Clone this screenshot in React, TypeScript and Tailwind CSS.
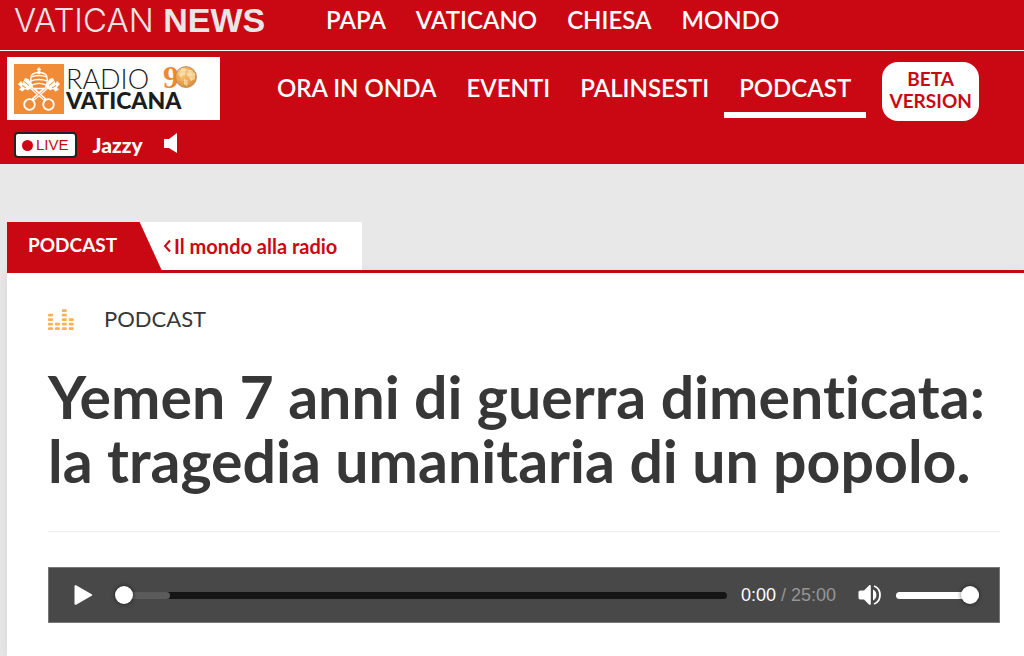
import React from 'react'

const sections = ['PAPA', 'VATICANO', 'CHIESA', 'MONDO']
const radioLinks = ['ORA IN ONDA', 'EVENTI', 'PALINSESTI', 'PODCAST']

// filled cells per column of the equalizer
const levels = [4, 2, 5, 3]

function Emblem() {
  return (
    <svg viewBox="0 0 50 50" className="h-[50px] w-[50px] shrink-0" aria-hidden="true">
      <rect width="50" height="50" fill="#f08c38" />
      <g fill="none" stroke="#fff">
        <circle cx="15.500" cy="40.500" r="5.300" strokeWidth="1.800" />
        <circle cx="34.500" cy="40.500" r="5.300" strokeWidth="1.800" />
        <path d="M18.500 36 37 20M31.500 36 13 20" strokeWidth="3.400" />
        <path d="M20 35 37 20M30 35 13 20" stroke="#f08c38" strokeWidth="0.900" />
        <path d="M17.500 11.500c-1.500 5-1 9 1.500 13h12c2.500-4 3-8 1.500-13-3-4-12-4-15 0z" fill="#f08c38" strokeWidth="1.400" />
        <path d="M17.500 13c4-2 11-2 15 0M17 17c4-2 12-2 16 0M18 21c4-2 10-2 14 0" strokeWidth="1.300" />
        <path d="M25 3.500v5M23 5.500h4" strokeWidth="1.400" />
        <path d="M21.500 25.500 25 29l3.500-3.500" strokeWidth="1.300" />
      </g>
      <g fill="#fff">
        <path d="M4 20l3-3 1.500 2.500L11 14l3.500 1 2.500 4 2 3-5 4.500-3-1.500-2.500 2.500L5 25.500l2-2zM46 20l-3-3-1.500 2.500L39 14l-3.500 1-2.500 4-2 3 5 4.500 3-1.500 2.500 2.500 3.500-2-2-2z" />
        <circle cx="25" cy="8.500" r="1.800" />
      </g>
      <path d="M10 17.500l5 4M8 21.500l4 2.500M40 17.500l-5 4M42 21.500l-4 2.500" stroke="#f08c38" strokeWidth="1" />
    </svg>
  )
}

function Globe() {
  return (
    <svg viewBox="0 0 22 22" className="-ml-1 h-[22px] w-[22px]" aria-hidden="true">
      <defs>
        <radialGradient id="globe" cx="0.4" cy="0.35" r="0.7">
          <stop offset="0" stopColor="#fbd28e" />
          <stop offset="0.6" stopColor="#f0a650" />
          <stop offset="1" stopColor="#d08a3c" />
        </radialGradient>
      </defs>
      <circle cx="11" cy="11" r="10.500" fill="url(#globe)" stroke="#a98a62" strokeWidth="0.800" />
      <path d="M3 6l4-4 5 1-1 4-3 2-1 3-3-2zM13 4l4 0 3 4 0 5-4 2-2-4-2-2zM9 13l4 2-1 5-3-2z" fill="#fbe3b4" opacity="0.850" />
      <path d="M1 11h20M11 1v20M3 6h16M3 16h16M6 2.500c-3 5-3 12 0 17M16 2.500c3 5 3 12 0 17" fill="none" stroke="#e08a2c" strokeWidth="0.400" opacity="0.600" />
    </svg>
  )
}

function Equalizer() {
  return (
    <svg viewBox="0 0 26 21" className="h-[21px] w-[26px]" fill="#fbb254" aria-hidden="true">
      {levels.map((count, col) =>
        Array.from({ length: count }, (_, row) => (
          <rect key={`${col}-${row}`} x={col * 6.9} y={18.2 - row * 4.5} width="5" height="2.800" rx="0.800" />
        ))
      )}
    </svg>
  )
}

const rangeClass =
  'relative block h-[18px] w-full appearance-none bg-transparent [&::-webkit-slider-thumb]:size-[18px] [&::-webkit-slider-thumb]:appearance-none [&::-webkit-slider-thumb]:rounded-full [&::-webkit-slider-thumb]:bg-white [&::-webkit-slider-thumb]:shadow-[0_0_4px_rgba(0,0,0,0.6)]'

function Player() {
  return (
    <div className="flex h-14 items-center border border-[#777] bg-[#484848] pr-5 pl-6">
      <button type="button" aria-label="Play">
        <svg viewBox="0 0 20 20" className="h-5 w-5" fill="#fff">
          <path d="M1.500 1.500C1.500.3 2.500 0 3.500.6l15.200 8.600c.8.500.8 1.200 0 1.600L3.500 19.400c-1 .6-2 .3-2-.9z" />
        </svg>
      </button>
      <div className="relative ml-[22px] flex-1">
        <div className="absolute inset-x-0 top-[6px] h-[7px] rounded-full bg-[#151515]">
          <div className="h-full w-[9%] rounded-full bg-[#5b5b5b]" />
        </div>
        <input type="range" aria-label="Seek" min={0} max={1500} defaultValue={0} className={rangeClass} />
      </div>
      <div className="ml-[14px] font-['Liberation_Sans',sans-serif] text-lg text-[#969696]">
        <span className="text-white">0:00</span> / 25:00
      </div>
      <button type="button" aria-label="Mute" className="ml-[22px]">
        <svg viewBox="0 0 24 22" className="h-[22px] w-6">
          <path d="M2.500 6.500H6l5-5c.8-.7 1.800-.5 1.800.7v17.600c0 1.200-1 1.400-1.800.7l-5-5H2.500c-1.500 0-2-.7-2-2v-5c0-1.300.5-2 2-2z" fill="#fff" />
          <path d="M15 5.500c4.500 2 4.500 9 0 11z" fill="#fff" />
          <path d="M16 2c8 3 8 15 0 18" fill="none" stroke="#fff" strokeWidth="1.800" />
        </svg>
      </button>
      <div className="relative ml-[14px] w-[83px]">
        <div className="absolute inset-x-0 top-[6px] h-[7px] rounded-full bg-white" />
        <input type="range" aria-label="Volume" min={0} max={100} defaultValue={100} className={rangeClass} />
      </div>
    </div>
  )
}

export default function App() {
  return (
    <div className="min-h-screen bg-[#e8e8e8] font-[Lato,sans-serif]">
      <header className="bg-[#ca0813] text-white">
        <div className="flex h-[51px] items-start border-b border-white pl-[14px]">
          <a href="#" className="w-[297px] font-['Liberation_Sans',sans-serif] text-[34px] leading-10 text-[#ebe6e6]">
            <span className="font-[Inter,sans-serif] text-[33px] font-light">VATICAN</span> <b>NEWS</b>
          </a>
          <nav className="flex text-2xl leading-10 font-semibold">
            {sections.map((name) => (
              <a key={name} href="#" className="px-[15px]">
                {name}
              </a>
            ))}
          </nav>
        </div>

        <div className="flex h-[113px] items-start pt-[6px] pl-[7px]">
          <div className="w-[213px]">
            <a href="#" className="flex h-[63px] items-center bg-white pl-[7px] text-[#1c1c1c]">
              <Emblem />
              <span className="ml-[2px] block pb-[2px]">
                <span className="flex items-center">
                  <span className="text-[27px] leading-6 font-light">RADIO</span>
                  <span className="ml-[14px] flex h-6 items-center pb-1">
                    <span className="font-['Liberation_Serif',serif] text-[32px] leading-5 font-bold text-[#ec8a33]">9</span>
                    <Globe />
                  </span>
                </span>
                <span className="block text-[23px] leading-[18px] font-black">VATICANA</span>
              </span>
            </a>
            <div className="mt-3 flex items-center pl-[7px]">
              <span className="flex h-[26px] items-center gap-[3px] rounded border-2 border-[#222] bg-white px-[6px] font-['Liberation_Sans',sans-serif] text-[15px] text-[#ca0813]">
                <span className="size-[11px] rounded-full bg-[#ca0813]" />
                LIVE
              </span>
              <span className="ml-4 text-[21px] leading-5 font-black">Jazzy</span>
              <button type="button" aria-label="Audio" className="-mt-1 ml-5">
                <svg viewBox="0 0 15 20" className="h-5 w-[15px]" fill="#fff">
                  <path d="M1 6h5l8-6v20l-8-5H1z" />
                </svg>
              </button>
            </div>
          </div>

          <nav className="ml-[42px] flex text-2xl leading-10 font-semibold">
            {radioLinks.map((name) => (
              <a
                key={name}
                href="#"
                className={`mt-[11px] h-[50px] px-[15px] whitespace-nowrap ${name === 'PODCAST' ? 'border-b-[6px] border-white' : ''}`}
              >
                {name}
              </a>
            ))}
          </nav>
          <a
            href="#"
            className="mt-[5px] ml-4 flex h-[59px] w-[97px] items-center justify-center rounded-2xl bg-white pb-1 text-center text-[19px] leading-[22px] font-bold text-[#ca0813]"
          >
            BETA
            <br />
            VERSION
          </a>
        </div>
      </header>

      <main className="pt-[58px] pl-[7px]">
        <div className="flex h-[51px] border-b-[3px] border-[#ca0813]">
          <div className="flex w-[355px] bg-white">
            <div className="-mb-[3px] w-[156px] bg-[#ca0813] pt-[9px] pl-[21px] text-[19px] leading-7 font-bold text-white [clip-path:polygon(0_0,85%_0,100%_100%,0_100%)]">
              PODCAST
            </div>
            <a href="#" className="flex items-center gap-[3px] text-xl font-bold text-[#ca0813]">
              <svg viewBox="0 0 8 14" className="h-[14px] w-2" fill="none" stroke="currentColor" strokeWidth="2">
                <path d="M7 1.500 2 7l5 5.500" />
              </svg>
              Il mondo alla radio
            </a>
          </div>
        </div>

        <article className="min-h-[384px] bg-white pt-[30px] pr-6 pl-[41px] text-[#373737] shadow-[0_0_12px_rgba(0,0,0,0.08)]">
          <div className="flex items-center gap-[30px] text-[22px] leading-8">
            <Equalizer />
            PODCAST
          </div>
          <h1 className="mt-[30px] text-[59px] leading-16 font-bold [font-variant-ligatures:none]">
            Yemen 7 anni di guerra dimenticata: la tragedia umanitaria di un popolo.
          </h1>
          <hr className="mt-[38px] mb-[35px] border-[#ececec]" />
          <Player />
        </article>
      </main>
    </div>
  )
}
